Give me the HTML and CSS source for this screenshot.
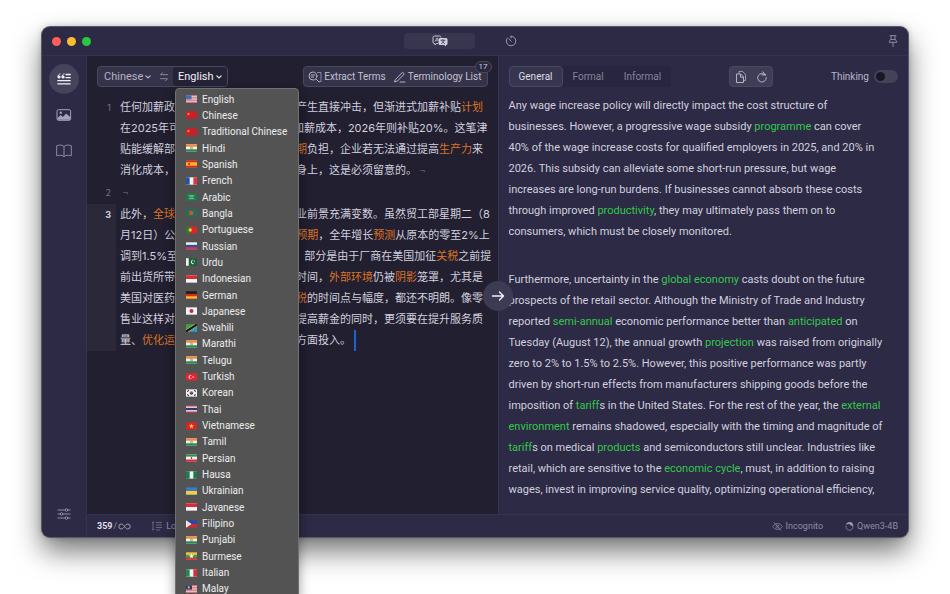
FILE: index.html
```html
<!DOCTYPE html>
<html lang="en">
<head>
    <meta charset="UTF-8">
    <meta name="viewport" content="width=device-width, initial-scale=1.0">
    <title>Translator</title>
    <link rel="stylesheet" href="styles.css">
</head>
<body>
    <!-- flag symbols -->
    <svg class="symbols" aria-hidden="true">
        <symbol id="us" viewBox="0 0 12 8"><path fill="#e9dede" d="M0 0h12v8H0z"/><path stroke="#cf5560" stroke-width=".8" d="M0 .4h12M0 2.2h12M0 4h12M0 5.8h12M0 7.6h12"/><path fill="#4a6bb0" d="M0 0h6v4.4H0z"/></symbol>
        <symbol id="cn" viewBox="0 0 12 8"><path fill="#cc1f28" d="M0 0h12v8H0z"/><path fill="#f0a030" d="M2.6 1l.5 1.3h1.3l-1 .8.4 1.3-1.2-.8-1.1.8.4-1.3-1-.8h1.3z"/></symbol>
        <symbol id="in" viewBox="0 0 12 8"><path fill="#f4f0ea" d="M0 0h12v8H0z"/><path fill="#ef8a3c" d="M0 0h12v2.6H0z"/><path fill="#2c8a48" d="M0 5.4h12V8H0z"/><circle cx="6" cy="4" r="1.1" fill="none" stroke="#4258a0" stroke-width=".6"/></symbol>
        <symbol id="es" viewBox="0 0 12 8"><path fill="#f3b92b" d="M0 0h12v8H0z"/><path fill="#cd2a2a" d="M0 0h12v2H0zM0 6h12v2H0zM2.5 3h2v2.2h-2z"/></symbol>
        <symbol id="fr" viewBox="0 0 12 8"><path fill="#f5f5f5" d="M0 0h12v8H0z"/><path fill="#2850a8" d="M0 0h4v8H0z"/><path fill="#dd3640" d="M8 0h4v8H8z"/></symbol>
        <symbol id="sa" viewBox="0 0 12 8"><path fill="#1d7a4b" d="M0 0h12v8H0z"/><path stroke="#a9d3bd" stroke-width=".8" d="M3 2.6h6M4 3.8h4M3 5.8h6"/></symbol>
        <symbol id="bd" viewBox="0 0 12 8"><path fill="#1f7257" d="M0 0h12v8H0z"/><circle cx="5.6" cy="4" r="2.4" fill="#d8502f"/></symbol>
        <symbol id="pt" viewBox="0 0 12 8"><path fill="#d8262c" d="M0 0h12v8H0z"/><path fill="#2a7a35" d="M0 0h4.6v8H0z"/><circle cx="4.6" cy="4" r="1.8" fill="#f0c93b"/></symbol>
        <symbol id="ru" viewBox="0 0 12 8"><path fill="#f2f2f5" d="M0 0h12v8H0z"/><path fill="#2d50a8" d="M0 2.7h12V8H0z"/><path fill="#d33a3f" d="M0 5.4h12V8H0z"/></symbol>
        <symbol id="pk" viewBox="0 0 12 8"><path fill="#17613a" d="M0 0h12v8H0z"/><path fill="#f0f3f0" d="M0 0h3v8H0zM8.800 1.800a2.400 2.400 0 1 0 1 3.400 2 2 0 1 1-1-3.400z"/><circle cx="9" cy="3" r=".6" fill="#fff"/></symbol>
        <symbol id="id" viewBox="0 0 12 8"><path fill="#f4f4f4" d="M0 0h12v8H0z"/><path fill="#dc2b33" d="M0 0h12v4H0z"/></symbol>
        <symbol id="de" viewBox="0 0 12 8"><path fill="#1b1b1b" d="M0 0h12v8H0z"/><path fill="#d82a24" d="M0 2.700h12V8H0z"/><path fill="#f5c130" d="M0 5.400h12V8H0z"/></symbol>
        <symbol id="jp" viewBox="0 0 12 8"><path fill="#f4f4f4" d="M0 0h12v8H0z"/><circle cx="6" cy="4" r="2.200" fill="#cf2340"/></symbol>
        <symbol id="tz" viewBox="0 0 12 8"><path fill="#2fa84c" d="M0 0h12L0 8z"/><path fill="#2f9bd6" d="M12 0v8H0z"/><path stroke="#f2cf3c" stroke-width="3.600" d="M0 8L12 0"/><path stroke="#151515" stroke-width="2.400" d="M0 8L12 0"/></symbol>
        <symbol id="tr" viewBox="0 0 12 8"><path fill="#dc2833" d="M0 0h12v8H0z"/><circle cx="4.800" cy="4" r="2" fill="#fff"/><circle cx="5.400" cy="4" r="1.500" fill="#dc2833"/><circle cx="7.800" cy="4" r=".7" fill="#fff"/></symbol>
        <symbol id="kr" viewBox="0 0 12 8"><path fill="#f1f1f1" d="M0 0h12v8H0z"/><path fill="#d03a48" d="M4 4a2 2 0 0 1 4 0z"/><path fill="#28509c" d="M4 4a2 2 0 0 0 4 0z"/><path stroke="#333" stroke-width="1.200" d="M1.500 2.400L3 1M9 1l1.500 1.400M1.500 5.600L3 7M9 7l1.500-1.400"/></symbol>
        <symbol id="th" viewBox="0 0 12 8"><path fill="#d33945" d="M0 0h12v8H0z"/><path fill="#f1f1f4" d="M0 1.300h12v5.400H0z"/><path fill="#2c3a80" d="M0 2.700h12v2.600H0z"/></symbol>
        <symbol id="vn" viewBox="0 0 12 8"><path fill="#d9232b" d="M0 0h12v8H0z"/><path fill="#fbd83a" d="M6 1.200l.7 2h2.100L7.100 4.500l.6 2.100L6 5.400 4.300 6.600l.6-2.100-1.700-1.300h2.100z"/></symbol>
        <symbol id="ir" viewBox="0 0 12 8"><path fill="#f4f0ee" d="M0 0h12v8H0z"/><path fill="#2a9250" d="M0 0h12v2.500H0z"/><path fill="#d5303a" d="M0 5.500h12V8H0zM5.300 3h1.400v2H5.300z"/></symbol>
        <symbol id="ng" viewBox="0 0 12 8"><path fill="#f2f5f2" d="M0 0h12v8H0z"/><path fill="#15804d" d="M0 0h4v8H0zM8 0h4v8H8z"/></symbol>
        <symbol id="ua" viewBox="0 0 12 8"><path fill="#3a78c8" d="M0 0h12v8H0z"/><path fill="#f2d13c" d="M0 4h12v4H0z"/></symbol>
        <symbol id="ph" viewBox="0 0 12 8"><path fill="#2748a8" d="M0 0h12v4H0z"/><path fill="#cf2838" d="M0 4h12v4H0z"/><path fill="#f3f1ea" d="M0 0l6 4-6 4z"/><circle cx="2" cy="4" r=".9" fill="#eebc35"/></symbol>
        <symbol id="mm" viewBox="0 0 12 8"><path fill="#f0c93a" d="M0 0h12v8H0z"/><path fill="#3fa046" d="M0 2.700h12V8H0z"/><path fill="#d8323a" d="M0 5.400h12V8H0z"/><path fill="#fff" d="M6 1.400l.7 1.900h2L7.100 4.500l.6 2L6 5.300l-1.700 1.200.6-2-1.600-1.200h2z"/></symbol>
        <symbol id="it" viewBox="0 0 12 8"><path fill="#f4f4f4" d="M0 0h12v8H0z"/><path fill="#218a4b" d="M0 0h4v8H0z"/><path fill="#d5303a" d="M8 0h4v8H8z"/></symbol>
        <symbol id="my" viewBox="0 0 12 8"><path fill="#eedfe0" d="M0 0h12v8H0z"/><path stroke="#d24a55" stroke-width=".8" d="M0 .4h12M0 2.200h12M0 4h12M0 5.800h12M0 7.600h12"/><path fill="#2b3476" d="M0 0h6.500v4.600H0z"/><circle cx="3" cy="2.300" r="1.200" fill="#e3c244"/></symbol>
    </svg>

    <div class="window">
        <header class="titlebar">
            <div class="lights">
                <button class="light red" aria-label="Close"></button>
                <button class="light yellow" aria-label="Minimize"></button>
                <button class="light green" aria-label="Zoom"></button>
            </div>
            <nav class="modes">
                <button class="mode active" aria-label="Translate">
                    <svg width="16" height="12" viewBox="0 0 16 12" fill="none">
                        <path d="M2.500 1h5A1.500 1.500 0 0 1 9 2.500M6 8.500H4.500L3 10V8.500h-.5A1.500 1.500 0 0 1 1 7V2.500A1.500 1.500 0 0 1 2.500 1" stroke="#c9c7d8"/>
                        <path d="M3.200 6.500L5 2.800l1.300 2.600M3.900 5.300h2" stroke="#c9c7d8" stroke-width=".8"/>
                        <path d="M8 3h6a1.500 1.500 0 0 1 1.500 1.500v4A1.500 1.500 0 0 1 14 10v1.500L12.300 10H8a1.500 1.500 0 0 1-1.500-1.500v-4A1.500 1.500 0 0 1 8 3z" fill="#d3d1e0"/>
                        <path d="M8.500 5.200h5M11 4.200v1M9.200 8.600c1.800-.6 2.600-1.800 3-3.400M9.700 5.300c.6 1.600 1.600 2.600 3.300 3.300" stroke="#35334f" stroke-width=".8"/>
                    </svg>
                </button>
                <button class="mode" aria-label="History">
                    <svg width="12" height="12" viewBox="0 0 12 12" fill="none" stroke="#9c9ab0" stroke-linecap="round">
                        <path d="M6 1.200A4.800 4.800 0 1 1 2.300 3M6 1.200V3M6.200 6.300L3.800 3.900"/>
                    </svg>
                </button>
            </nav>
            <button class="icon-btn pin" aria-label="Pin window">
                <svg width="10" height="12" viewBox="0 0 10 12" fill="none" stroke="#8d8ba3" stroke-linejoin="round" stroke-linecap="round">
                    <path d="M2 .7h6M3.200.7l-.3 4C1.800 5.300 1.200 6 1.200 7.300h7.600C8.800 6 8.200 5.300 7.100 4.700l-.3-4M3 4.500h4M5 7.500v4"/>
                </svg>
            </button>
        </header>

        <div class="main">
            <aside class="sidebar">
                <button class="side-btn active" aria-label="Text">
                    <svg width="14" height="12" viewBox="0 0 14 12" fill="none" stroke="#f0eff6" stroke-width="1.300" stroke-linecap="round">
                        <path d="M9 1.500h4.300M9 4.600h4.300M.8 7.700h12.400M.8 10.800h12.400"/>
                        <path d="M3 .9C1.700 1.400 1 2.300 1 3.800M7 .9C5.700 1.400 5 2.300 5 3.800" stroke-width="1"/>
                        <g fill="#f0eff6" stroke="none"><circle cx="2.100" cy="3.900" r="1.500"/><circle cx="6.100" cy="3.900" r="1.500"/></g>
                    </svg>
                </button>
                <button class="side-btn" aria-label="Image">
                    <svg width="16" height="12" viewBox="0 0 16 12" fill="none" stroke="#a5a3b8">
                        <rect x="1" y=".7" width="13.600" height="10.600" rx="1.500"/>
                        <path d="M1.500 9l3.200-3 2.200 2 3.200-3.400L14.200 8v2.800H1.500z" fill="#a5a3b8" stroke="none"/>
                        <circle cx="4.800" cy="3.700" r="1.200" fill="#a5a3b8" stroke="none"/>
                    </svg>
                </button>
                <button class="side-btn" aria-label="Glossary">
                    <svg width="16" height="14" viewBox="0 0 16 14" fill="none" stroke="#8f8da4" stroke-linejoin="round">
                        <path d="M8 2.500C6.500.8 3 .7.700 1.800v10C3 10.900 6.500 11 8 12.700c1.500-1.700 5-1.800 7.300-.9v-10C13 .7 9.500.8 8 2.500zM8 2.500v10"/>
                    </svg>
                </button>
                <button class="side-btn settings" aria-label="Settings">
                    <svg width="14" height="12" viewBox="0 0 14 12" fill="none" stroke="#8f8da4" stroke-linecap="round">
                        <path d="M1 2h7M11 2h2M1 6h2M6 6h7M1 10h7M11 10h2"/>
                        <circle cx="9.500" cy="2" r="1.300"/><circle cx="4.500" cy="6" r="1.300"/><circle cx="9.500" cy="10" r="1.300"/>
                    </svg>
                </button>
            </aside>

            <div class="content">
                <div class="panes">
                    <section class="pane source">
                        <div class="toolbar">
                            <div class="languages">
                                <label class="from">
                                    <select aria-label="Source language">
                                        <option>Chinese</option>
                                    </select>
                                    <svg width="6" height="4" viewBox="0 0 6 4" fill="none" stroke="#b4b2c4" stroke-width="1.200" stroke-linecap="round"><path d="M.8.800L3 3 5.200.800"/></svg>
                                </label>
                                <button class="swap" aria-label="Swap languages">
                                    <svg width="10" height="10" viewBox="0 0 10 10" fill="none" stroke="#8a889c" stroke-linecap="round" stroke-linejoin="round"><path d="M8.500 2.700H1.500L3.500.8M1.500 6.700h7L6.500 8.700"/></svg>
                                </button>
                                <div class="to">
                                    <button class="to-btn" aria-haspopup="listbox" aria-expanded="true">English
                                        <svg width="6" height="4" viewBox="0 0 6 4" fill="none" stroke="#e8e7f0" stroke-width="1.200" stroke-linecap="round"><path d="M.8.800L3 3 5.200.800"/></svg>
                                    </button>
                                    <ul class="menu" role="listbox" aria-label="Target language">
                                        <li role="option"><svg class="flag"><use href="#us"/></svg>English</li>
                                        <li role="option"><svg class="flag"><use href="#cn"/></svg>Chinese</li>
                                        <li role="option"><svg class="flag"><use href="#cn"/></svg>Traditional Chinese</li>
                                        <li role="option"><svg class="flag"><use href="#in"/></svg>Hindi</li>
                                        <li role="option"><svg class="flag"><use href="#es"/></svg>Spanish</li>
                                        <li role="option"><svg class="flag"><use href="#fr"/></svg>French</li>
                                        <li role="option"><svg class="flag"><use href="#sa"/></svg>Arabic</li>
                                        <li role="option"><svg class="flag"><use href="#bd"/></svg>Bangla</li>
                                        <li role="option"><svg class="flag"><use href="#pt"/></svg>Portuguese</li>
                                        <li role="option"><svg class="flag"><use href="#ru"/></svg>Russian</li>
                                        <li role="option"><svg class="flag"><use href="#pk"/></svg>Urdu</li>
                                        <li role="option"><svg class="flag"><use href="#id"/></svg>Indonesian</li>
                                        <li role="option"><svg class="flag"><use href="#de"/></svg>German</li>
                                        <li role="option"><svg class="flag"><use href="#jp"/></svg>Japanese</li>
                                        <li role="option"><svg class="flag"><use href="#tz"/></svg>Swahili</li>
                                        <li role="option"><svg class="flag"><use href="#in"/></svg>Marathi</li>
                                        <li role="option"><svg class="flag"><use href="#in"/></svg>Telugu</li>
                                        <li role="option"><svg class="flag"><use href="#tr"/></svg>Turkish</li>
                                        <li role="option"><svg class="flag"><use href="#kr"/></svg>Korean</li>
                                        <li role="option"><svg class="flag"><use href="#th"/></svg>Thai</li>
                                        <li role="option"><svg class="flag"><use href="#vn"/></svg>Vietnamese</li>
                                        <li role="option"><svg class="flag"><use href="#in"/></svg>Tamil</li>
                                        <li role="option"><svg class="flag"><use href="#ir"/></svg>Persian</li>
                                        <li role="option"><svg class="flag"><use href="#ng"/></svg>Hausa</li>
                                        <li role="option"><svg class="flag"><use href="#ua"/></svg>Ukrainian</li>
                                        <li role="option"><svg class="flag"><use href="#id"/></svg>Javanese</li>
                                        <li role="option"><svg class="flag"><use href="#ph"/></svg>Filipino</li>
                                        <li role="option"><svg class="flag"><use href="#in"/></svg>Punjabi</li>
                                        <li role="option"><svg class="flag"><use href="#mm"/></svg>Burmese</li>
                                        <li role="option"><svg class="flag"><use href="#it"/></svg>Italian</li>
                                        <li role="option"><svg class="flag"><use href="#my"/></svg>Malay</li>
                                    </ul>
                                </div>
                            </div>
                            <div class="terms">
                                <button>
                                    <svg width="14" height="12" viewBox="0 0 14 12" fill="none" stroke="#b4b2c4" stroke-linecap="round"><path d="M9.500 1.500h3.500v9h-1.500" stroke-width=".7"/><circle cx="5" cy="5" r="4"/><path d="M8 8l3 3M3.200 4h3.600M3.200 6h2.400"/></svg>
                                    Extract Terms
                                </button>
                                <button>
                                    <svg width="12" height="12" viewBox="0 0 12 12" fill="none" stroke="#b4b2c4" stroke-linejoin="round" stroke-linecap="round"><path d="M1.500 8.500L8.500 1.200l1.800 1.700L3.500 10l-2.700.8zM6 11h5"/></svg>
                                    Terminology List
                                </button>
                                <span class="badge">17</span>
                            </div>
                        </div>
                        <div class="editor" lang="zh-CN">
                            <div class="row">
                                <span class="num">1</span>
                                <p>任何加薪政策都会对企业的成本结构产生直接冲击，但渐进式加薪补贴<em>计划</em>在2025年可为合格雇主承担40%的加薪成本，2026年则补贴20%。这笔津贴能缓解部分短期压力，但加薪是<em>长期</em>负担，企业若无法通过提高<em>生产力</em>来消化成本，最终可能转嫁到消费者的身上，这是必须留意的。<i>¬</i></p>
                            </div>
                            <div class="row">
                                <span class="num">2</span>
                                <p><i>¬</i></p>
                            </div>
                            <div class="row current">
                                <span class="num">3</span>
                                <p>此外，<em>全球经济</em>不确定性也使零售行业前景充满变数。虽然贸工部星期二（8月12日）公布的半年经济表现要好于<em>预期</em>，全年增长<em>预测</em>从原本的零至2%上调到1.5%至2.5%，但这个正面表现，部分是由于厂商在美国加征<em>关税</em>之前提前出货所带动的短期效应。今年余下时间，<em>外部环境</em>仍被<em>阴影</em>笼罩，尤其是美国对医药<em>产品</em>和半导体加征的新<em>关税</em>的时间点与幅度，都还不明朗。像零售业这样对经济周期敏感的行业，在提高薪金的同时，更须要在提升服务质量、<em>优化运营效率</em>及扩大客户群体等方面投入。<span class="caret"></span></p>
                            </div>
                        </div>
                        <button class="translate" aria-label="Translate text">
                            <svg width="14" height="12" viewBox="0 0 14 12" fill="none" stroke="#f2f1f8" stroke-width="1.400" stroke-linecap="round" stroke-linejoin="round"><path d="M1.500 6h11M8.500 2l4 4-4 4"/></svg>
                        </button>
                    </section>

                    <section class="pane result">
                        <div class="toolbar">
                            <div class="tabs">
                                <button class="active">General</button>
                                <button>Formal</button>
                                <button>Informal</button>
                            </div>
                            <div class="actions">
                                <button aria-label="Copy">
                                    <svg width="12" height="14" viewBox="0 0 12 14" fill="none" stroke="#b4b2c4" stroke-linejoin="round"><path d="M1.500 4h4.200L8.500 7v5.500h-7zM5.500 4v3.200h3"/><path d="M4 3.500v-2h3.700l2.800 3v6h-1.700" stroke-width=".8"/></svg>
                                </button>
                                <button aria-label="Retry">
                                    <svg width="12" height="12" viewBox="0 0 12 12" fill="none" stroke="#b4b2c4" stroke-linecap="round" stroke-linejoin="round"><path d="M9.300 4A4.300 4.300 0 1 0 10.300 6.700M6 3.900h3.500M6.800.8l2.700 3.100"/></svg>
                                </button>
                            </div>
                            <label class="thinking">Thinking <input type="checkbox"></label>
                        </div>
                        <div class="output">
                            <p>Any wage increase policy will directly impact the cost structure of businesses. However, a progressive wage subsidy <em>programme</em> can cover 40% of the wage increase costs for qualified employers in 2025, and 20% in 2026. This subsidy can alleviate some short-run pressure, but wage increases are long-run burdens. If businesses cannot absorb these costs through improved <em>productivity</em>, they may ultimately pass them on to consumers, which must be closely monitored.</p>
                            <p>Furthermore, uncertainty in the <em>global economy</em> casts doubt on the future prospects of the retail sector. Although the Ministry of Trade and Industry reported <em>semi-annual</em> economic performance better than <em>anticipated</em> on Tuesday (August 12), the annual growth <em>projection</em> was raised from originally zero to 2% to 1.5% to 2.5%. However, this positive performance was partly driven by short-run effects from manufacturers shipping goods before the imposition of <em>tariff</em>s in the United States. For the rest of the year, the <em>external environment</em> remains shadowed, especially with the timing and magnitude of <em>tariff</em>s on medical <em>products</em> and semiconductors still unclear. Industries like retail, which are sensitive to the <em>economic cycle</em>, must, in addition to raising wages, invest in improving service quality, optimizing operational efficiency,</p>
                        </div>
                    </section>
                </div>

                <footer class="statusbar">
                    <span class="count"><b>359</b><span class="slash">/</span><svg width="13" height="7" viewBox="0 0 13 7" fill="none" stroke="#a3a1b6"><path d="M6.500 3.500C5.300 1.800 4.500 1 3.300 1a2.500 2.500 0 0 0 0 5c1.200 0 2-.8 3.200-2.500S8.500 1 9.700 1a2.500 2.500 0 0 1 0 5c-1.200 0-2-.8-3.200-2.500z"/></svg></span>
                    <span class="item length">
                        <svg width="12" height="10" viewBox="0 0 12 10" fill="none" stroke="#77758c"><path d="M2 1v8M.8 2L2 .8 3.200 2M.8 8L2 9.200 3.200 8M5 1.500h6M5 4h6M5 6.500h6M5 9h4" stroke-width=".8"/></svg>
                        Long Text
                    </span>
                    <span class="item incognito">
                        <svg width="11" height="9" viewBox="0 0 11 9" fill="none" stroke="#77758c"><path d="M.7 4.500C2 2.500 3.600 1.500 5.500 1.500s3.500 1 4.800 3C9 6.500 7.400 7.500 5.500 7.500s-3.500-1-4.800-3zM2 .5l7 8"/><circle cx="5.500" cy="4.500" r="1.500"/></svg>
                        Incognito
                    </span>
                    <span class="item">
                        <svg width="9" height="10" viewBox="0 0 9 10" fill="none" stroke="#77758c"><path d="M1 4.500c0 3 1 4.800 3.500 4.800S8 7.500 8 4.500"/><path d="M.7 3.500C1.500 1.500 3.500.7 5.500 1c2 .4 2.800 1.800 2.600 4L6 4.800 4.500 3z" fill="#9a98ad" stroke="none"/></svg>
                        Qwen3-4B
                    </span>
                </footer>
            </div>
        </div>
    </div>
</body>
</html>
```
FILE: styles.css
```css
* {
    margin: 0;
    padding: 0;
    box-sizing: border-box;
}

body {
    background: #fff;
    height: 100vh;
    padding: 27px 42px 57px;
    overflow: hidden;
    display: flex;
    font-family: Roboto, "Noto Sans CJK SC", sans-serif;
    font-size: 10px;
    color: #d2d0df;
}

button,
select {
    font: inherit;
    color: inherit;
    background: none;
    border: none;
    cursor: pointer;
}

em,
i {
    font-style: normal;
}

svg {
    display: block;
    flex: none;
}

.symbols {
    position: absolute;
    width: 0;
    height: 0;
}

.window {
    flex: 1;
    min-width: 0;
    display: flex;
    flex-direction: column;
    background: #2c2a45;
    border-radius: 8px;
    box-shadow: 0 0 0 1px #5a5868, 0 14px 28px rgba(0, 0, 0, 0.55), 0 0 6px rgba(0, 0, 0, 0.25);
}

/* title bar */
.titlebar {
    height: 29px;
    flex: none;
    display: grid;
    grid-template-columns: 1fr 142px 1fr;
    align-items: center;
    padding: 0 10px;
    border-bottom: 1px solid #34324d;
}

.lights {
    display: flex;
    gap: 6px;
}

.light {
    width: 9px;
    height: 9px;
    border-radius: 50%;
}

.red { background: #ff5f57; }
.yellow { background: #febc2e; }
.green { background: #28c840; }

.modes {
    display: grid;
    grid-template-columns: 1fr 1fr;
}

.mode {
    height: 16px;
    border-radius: 4px;
    display: grid;
    place-items: center;
}

.mode.active {
    background: #38364f;
}

.pin {
    justify-self: end;
}

/* layout */
.main {
    flex: 1;
    min-height: 0;
    display: flex;
}

.sidebar {
    width: 45px;
    flex: none;
    display: flex;
    flex-direction: column;
    align-items: center;
    gap: 6px;
    padding: 8px 0;
    border-right: 1px solid #34324d;
}

.side-btn {
    width: 30px;
    height: 30px;
    border-radius: 50%;
    display: grid;
    place-items: center;
}

.side-btn.active {
    background: #45435b;
}

.settings {
    margin-top: auto;
}

.content {
    flex: 1;
    min-width: 0;
    display: flex;
    flex-direction: column;
}

.panes {
    flex: 1;
    min-height: 0;
    display: grid;
    grid-template-columns: 1fr 1fr;
    grid-template-rows: minmax(0, 1fr);
}

.pane {
    position: relative;
    min-width: 0;
    display: flex;
    flex-direction: column;
}

.source {
    background: #211f30;
    z-index: 1;
}

.toolbar {
    display: flex;
    justify-content: space-between;
    align-items: center;
    padding: 10px 10px 8px;
}

/* language picker */
.languages,
.terms,
.actions {
    display: flex;
    height: 21px;
    background: #35334a;
    border: 1px solid #4a485e;
    border-radius: 4px;
}

.from {
    display: flex;
    align-items: center;
    gap: 1px;
    padding: 0 4px 0 6px;
    color: #b4b2c4;
}

.from select {
    appearance: none;
    font-size: 11px;
}

.swap {
    width: 18px;
    display: grid;
    place-items: center;
}

.to {
    position: relative;
}

.to-btn {
    display: flex;
    align-items: center;
    gap: 2px;
    height: 100%;
    padding: 0 5px;
    background: #252336;
    border-radius: 3px;
    font-size: 11px;
    color: #f2f1f8;
}

.menu {
    position: absolute;
    top: 21px;
    left: 2px;
    width: 124px;
    height: 510px;
    padding: 2px 10px 0;
    display: grid;
    grid-auto-rows: 1fr;
    list-style: none;
    background: #535353;
    border: 1px solid #707070;
    border-radius: 4px;
    box-shadow: 0 4px 12px rgba(0, 0, 0, 0.4);
    color: #ececec;
}

.menu li {
    display: flex;
    align-items: center;
    gap: 5px;
    white-space: nowrap;
}

.flag {
    width: 11px;
    height: 8px;
}

/* term buttons */
.terms {
    position: relative;
    gap: 8px;
    padding: 0 5px 0 4px;
}

.terms button {
    display: flex;
    align-items: center;
    gap: 2px;
    color: #c3c1d2;
}

.badge {
    position: absolute;
    top: -6px;
    right: -5px;
    padding: 0 3px;
    font-size: 8px;
    line-height: 10px;
    background: #2a2840;
    border: 1px solid #4a485e;
    border-radius: 6px;
}

/* source text */
.editor {
    padding-top: 2px;
    font-family: Inter, "Noto Sans CJK SC", sans-serif;
    font-size: 11px;
    line-height: 21px;
}

.row {
    display: flex;
    margin-bottom: 1px;
}

.num {
    width: 29px;
    flex: none;
    padding-right: 5px;
    text-align: right;
    font-size: 9px;
    color: #77758a;
}

.row p {
    flex: 1;
    padding: 0 4px;
}

.row i {
    color: #5c5a70;
    margin-left: 2px;
}

.editor em {
    color: #dd7424;
}

.current .num {
    background: #2a2839;
    font-weight: 700;
    color: #d2d0df;
}

.caret {
    display: inline-block;
    width: 2px;
    height: 21px;
    margin-left: 3px;
    vertical-align: top;
    background: #1f62c9;
}

.translate {
    position: absolute;
    top: 225px;
    right: -15px;
    width: 30px;
    height: 30px;
    border-radius: 50%;
    background: #3d3b54;
    display: grid;
    place-items: center;
}

/* result */
.result {
    border-left: 1px solid #34324d;
}

.tabs {
    display: flex;
    height: 21px;
    background: #272540;
    border-radius: 4px;
    color: #85839a;
}

.tabs button {
    padding: 0 9px;
    border: 1px solid transparent;
    border-radius: 4px;
}

.tabs .active {
    background: #38364f;
    border-color: #4a485e;
    color: #dddbe8;
}

.actions {
    background: #403e56;
}

.actions button {
    width: 21px;
    display: grid;
    place-items: center;
}

.thinking {
    display: flex;
    align-items: center;
    gap: 5px;
    color: #b9b7c8;
}

.thinking input {
    appearance: none;
    width: 24px;
    height: 13px;
    padding: 2px;
    border-radius: 7px;
    background: #444259;
}

.thinking input::before {
    content: "";
    display: block;
    width: 9px;
    height: 9px;
    border-radius: 50%;
    background: #191724;
}

.output {
    padding: 0 24px 0 10px;
    font-size: 11px;
    line-height: 21px;
    overflow: hidden;
}

.output p {
    margin-bottom: 27px;
}

.output em {
    color: #35c74b;
}

/* status bar */
.statusbar {
    height: 23px;
    flex: none;
    display: flex;
    align-items: center;
    padding: 0 10px;
    border-top: 1px solid #34324d;
    font-size: 9px;
    color: #8f8da4;
}

.count {
    display: flex;
    align-items: center;
    gap: 1px;
}

.count b {
    color: #e0deea;
}

.item {
    display: flex;
    align-items: center;
    gap: 3px;
}

.length {
    margin-left: 20px;
}

.incognito {
    margin-left: auto;
    margin-right: 22px;
}
```
